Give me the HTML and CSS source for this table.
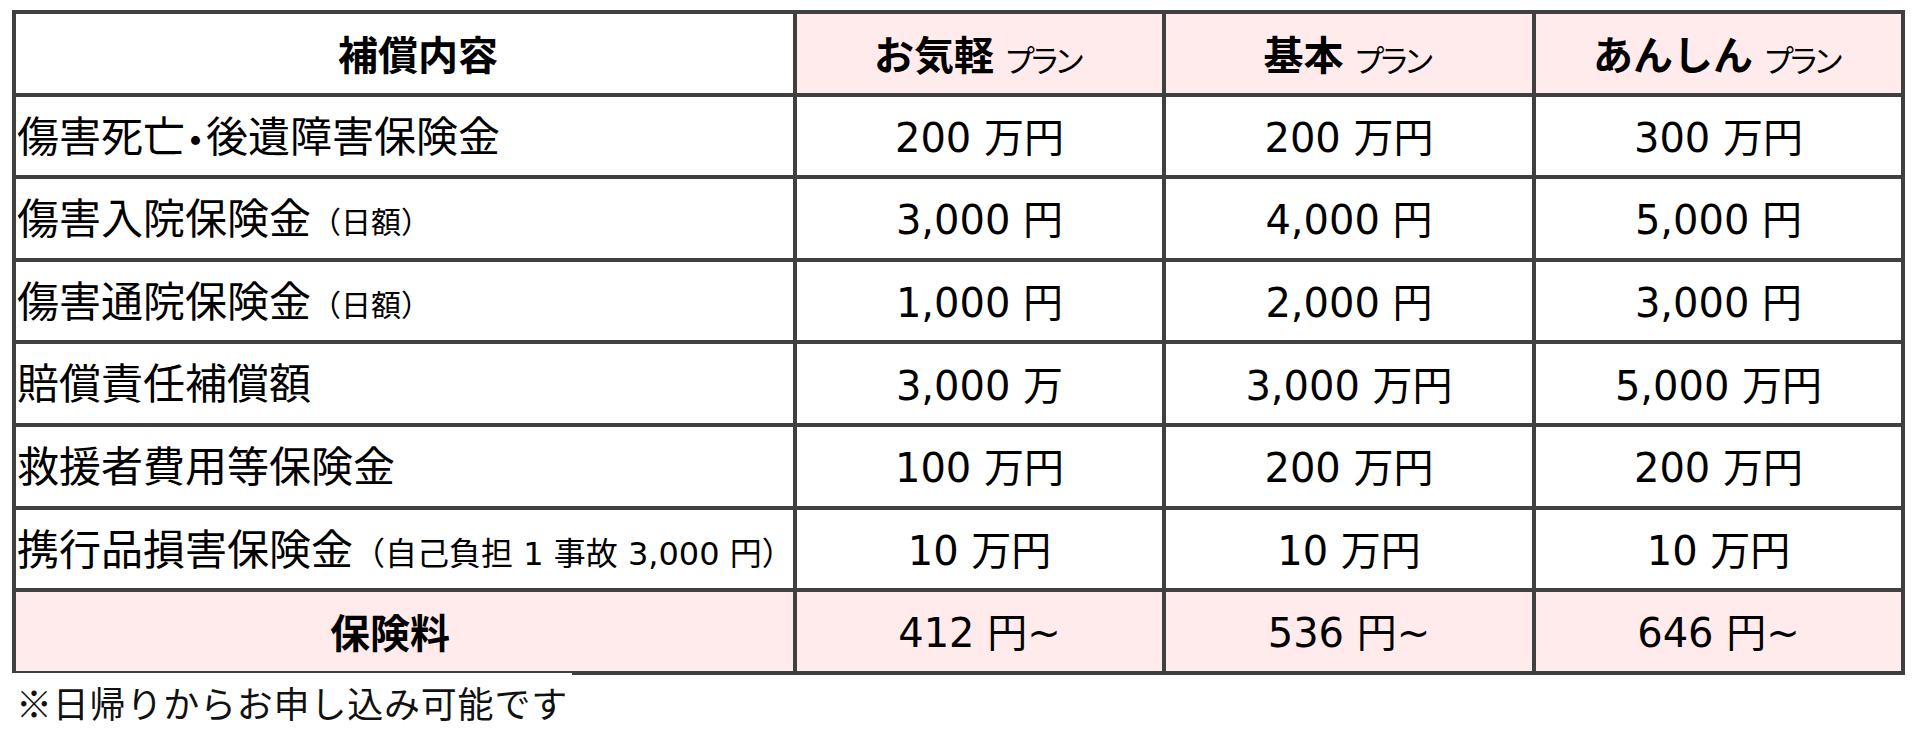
FILE: index.html
```html
<!DOCTYPE html>
<html lang="ja">
<head>
<meta charset="utf-8">
<title>補償内容</title>
<link rel="stylesheet" href="styles.css">
</head>
<body>
<div class="page">
  <div class="plan-table">
    <div class="cell head head-title">補償内容</div>
    <div class="cell head pink">お気軽<span class="plan">プラン</span></div>
    <div class="cell head pink">基本<span class="plan">プラン</span></div>
    <div class="cell head pink">あんしん<span class="plan">プラン</span></div>

    <div class="cell label">傷害死亡<span class="dot">・</span>後遺障害保険金</div>
    <div class="cell val">200 万円</div>
    <div class="cell val">200 万円</div>
    <div class="cell val">300 万円</div>

    <div class="cell label">傷害入院保険金<span class="sub">（日額）</span></div>
    <div class="cell val">3,000 円</div>
    <div class="cell val">4,000 円</div>
    <div class="cell val">5,000 円</div>

    <div class="cell label">傷害通院保険金<span class="sub">（日額）</span></div>
    <div class="cell val">1,000 円</div>
    <div class="cell val">2,000 円</div>
    <div class="cell val">3,000 円</div>

    <div class="cell label">賠償責任補償額</div>
    <div class="cell val">3,000 万</div>
    <div class="cell val">3,000 万円</div>
    <div class="cell val">5,000 万円</div>

    <div class="cell label">救援者費用等保険金</div>
    <div class="cell val">100 万円</div>
    <div class="cell val">200 万円</div>
    <div class="cell val">200 万円</div>

    <div class="cell label">携行品損害保険金<span class="sub sub-wide">（自己負担 1 事故 3,000 円）</span></div>
    <div class="cell val">10 万円</div>
    <div class="cell val">10 万円</div>
    <div class="cell val">10 万円</div>

    <div class="cell head head-fee pink">保険料</div>
    <div class="cell val pink">412 円~</div>
    <div class="cell val pink">536 円~</div>
    <div class="cell val pink">646 円~</div>
  </div>
  <p class="note">※日帰りからお申し込み可能です</p>
</div>
</body>
</html>
```

FILE: styles.css
```css
html, body {
  margin: 0;
  padding: 0;
  background: #ffffff;
}

.page {
  padding: 10px 0 0 12px;
  color: #000000;
}

.plan-table {
  display: grid;
  grid-template-columns: 781px 369px 370px 369px;
  grid-auto-rows: 82.6px;
  width: max-content;
  border-top: 4px solid #404040;
  border-left: 4px solid #404040;
}

.cell {
  box-sizing: border-box;
  border-right: 4px solid #404040;
  border-bottom: 4px solid #404040;
  display: flex;
  align-items: center;
  justify-content: center;
  padding-top: 4px;
  font-family: "DejaVu Sans", "Noto Sans CJK JP", sans-serif;
  font-size: 40px;
  line-height: 1.2;
  white-space: nowrap;
  background: #ffffff;
}

.pink {
  background: #ffebeb;
}

.head {
  font-family: "Noto Sans CJK JP", sans-serif;
  font-weight: 700;
  padding-top: 0;
}

.head-title {
  padding-left: 27px;
}

.head-fee {
  padding-right: 29px;
}

.plan {
  font-family: "Noto Sans CJK JP", sans-serif;
  font-weight: 400;
  font-size: 31px;
  letter-spacing: -6px;
  margin-left: 10px;
  margin-right: 6px;
  align-self: center;
  padding-top: 10px;
}

.label {
  justify-content: flex-start;
  padding-left: 1px;
  font-size: 42px;
}

.dot {
  font-family: "Noto Sans CJK JP", sans-serif;
  font-feature-settings: "palt";
}

.sub {
  font-size: 30px;
  padding-top: 6px;
}

.sub-wide {
  font-size: 32px;
}

.note {
  position: relative;
  display: inline-block;
  margin: -2px 0 0 0;
  padding: 0 4px 0 4px;
  background: #ffffff;
  font-family: "Noto Sans CJK JP", sans-serif;
  font-size: 36px;
  letter-spacing: 0.8px;
  line-height: 58px;
  color: #111111;
}
```
